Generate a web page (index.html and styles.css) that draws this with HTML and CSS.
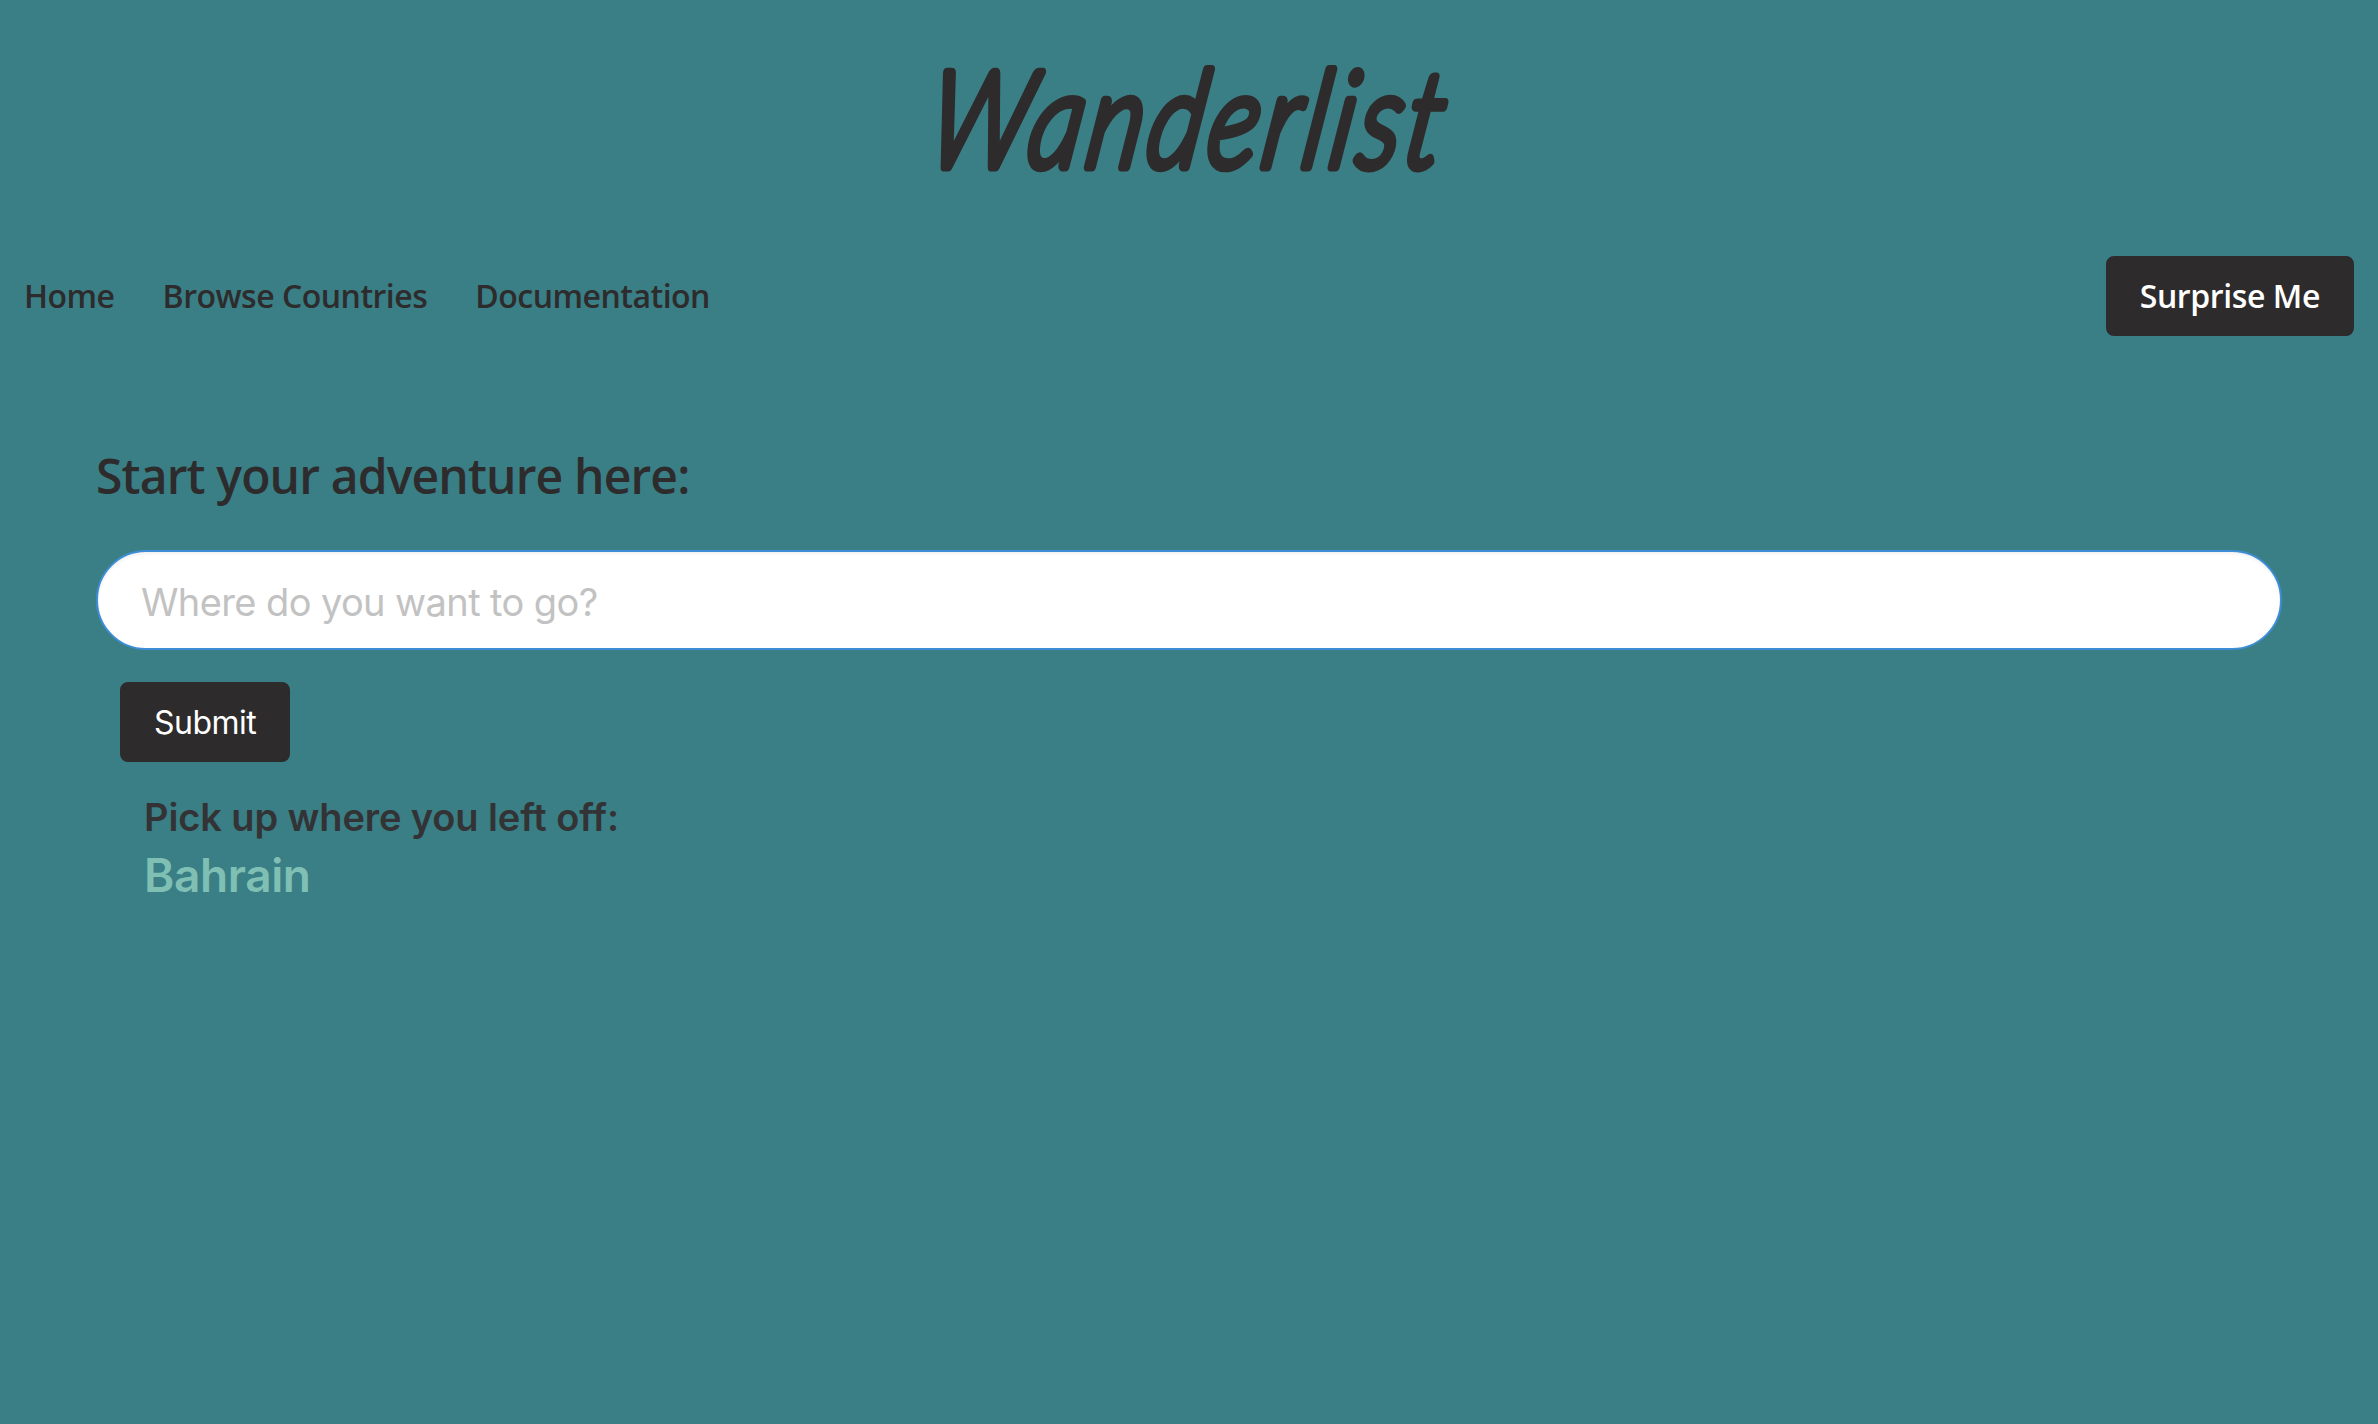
FILE: index.html
```html
<!DOCTYPE html>
<html lang="en">
<head>
<meta charset="utf-8">
<title>Wanderlist</title>
<link rel="stylesheet" href="styles.css">
</head>
<body>
<header class="masthead">
  <h1 class="brand">
    <svg class="brand-svg" width="580" height="150" viewBox="0 0 580 150" role="img" aria-label="Wanderlist">
      <text class="brand-text" x="0" y="0" transform="translate(25 117) skewX(-9) scale(0.8 1)" textLength="642" lengthAdjust="spacing">Wanderlist</text>
    </svg>
  </h1>
</header>
<nav class="nav">
  <div class="nav-links">
    <a class="nav-link" href="#">Home</a>
    <a class="nav-link" href="#">Browse Countries</a>
    <a class="nav-link" href="#">Documentation</a>
  </div>
  <button class="btn btn-nav" type="button">Surprise Me</button>
</nav>
<main class="main">
  <h2 class="lead">Start your adventure here:</h2>
  <form class="search">
    <input class="search-input" type="text" placeholder="Where do you want to go?">
    <button class="btn btn-submit" type="button">Submit</button>
  </form>
  <section class="recent">
    <h3 class="recent-title">Pick up where you left off:</h3>
    <a class="recent-link" href="#">Bahrain</a>
  </section>
</main>
</body>
</html>
```
FILE: styles.css
```css
* { box-sizing: border-box; }
html, body { height: 100%; }
body {
  margin: 0;
  background: #397f85;
  color: #2e2b2d;
  font-family: "Inter", "Liberation Sans", sans-serif;
}
.masthead {
  height: 256px;
  display: flex;
  justify-content: center;
  padding-top: 50px;
}
.brand { margin: 0; line-height: 0; }
.brand-svg { display: block; overflow: visible; }
.brand-text {
  font-family: "Lato", sans-serif;
  font-style: italic;
  font-weight: 300;
  font-size: 134px;
  fill: #2e2b2d;
  stroke: #2e2b2d;
  stroke-width: 9px;
  stroke-linejoin: round;
  stroke-linecap: round;
}
.nav {
  display: flex;
  justify-content: space-between;
  align-items: center;
  padding: 0 24px;
}
.nav-links { display: flex; gap: 48px; }
.nav-link {
  font-family: "Open Sans", sans-serif;
  font-size: 32px;
  font-weight: 600;
  letter-spacing: -0.5px;
  line-height: 48px;
  color: #2e2b2d;
  text-decoration: none;
}
.btn {
  display: block;
  height: 80px;
  padding: 14px 32px;
  border: 2px solid #2e2b2d;
  border-radius: 8px;
  background: #2e2b2d;
  color: #fff;
  font-size: 32px;
  line-height: 48px;
}
.btn-nav { font-family: "Open Sans", sans-serif; font-weight: 600; letter-spacing: -0.4px; }
.btn-submit {
  font-family: "Inter", sans-serif;
  font-weight: 400;
  letter-spacing: -0.5px;
  margin: 32px 0 0 24px;
  padding: 15px 32px 13px;
}
.main { padding: 0 96px; }
.lead {
  margin: 104px 0 0;
  font-family: "Open Sans", sans-serif;
  font-size: 48px;
  font-weight: 600;
  letter-spacing: -0.85px;
  line-height: 72px;
}
.search { margin-top: 38px; }
.search-input {
  display: block;
  width: 100%;
  height: 100px;
  padding: 3px 43px 0;
  border: 2px solid #3d8ed6;
  border-radius: 50px;
  background: #fff;
  box-shadow: inset 0 2px 3px rgba(0,0,0,.06);
  font-family: "Inter", sans-serif;
  font-size: 38px;
  letter-spacing: -0.6px;
  outline: none;
}
.search-input::placeholder { color: #c2c2c2; opacity: 1; }
.recent { padding-left: 48px; margin-top: 27px; }
.recent-title {
  margin: 0;
  font-size: 38px;
  font-weight: 600;
  letter-spacing: -0.11px;
  line-height: 56px;
  color: #333336;
}
.recent-link {
  display: block;
  font-size: 46px;
  font-weight: 600;
  letter-spacing: -0.4px;
  line-height: 60px;
  color: #80bfb3;
  text-decoration: none;
}
```
